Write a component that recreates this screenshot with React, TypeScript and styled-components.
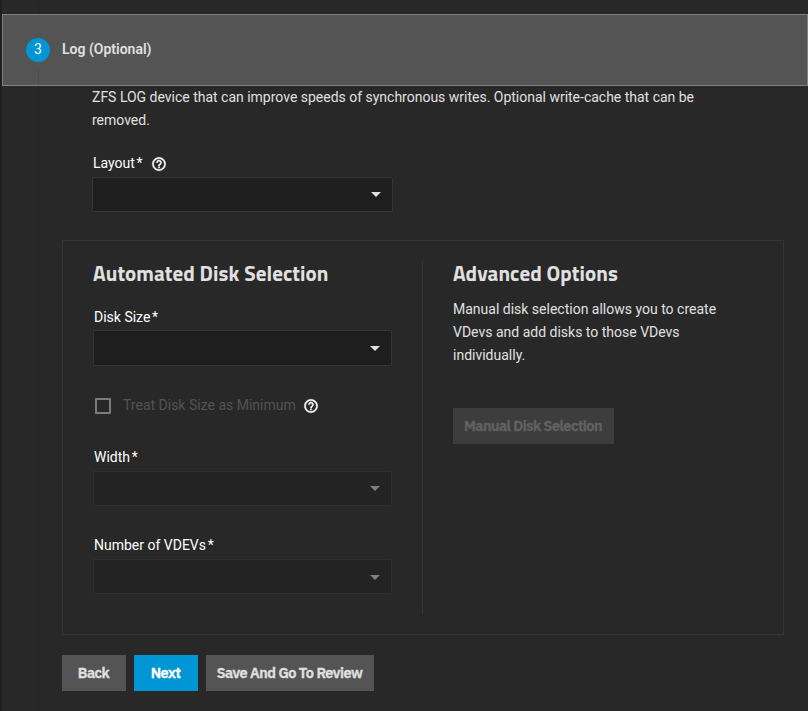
import React from 'react';
import styled, { createGlobalStyle } from 'styled-components';

const GlobalStyle = createGlobalStyle`
  * { box-sizing: border-box; }
  body {
    margin: 0;
    background: #282828;
    color: #e0e0e0;
    font-family: Roboto, sans-serif;
    font-size: 14px;
    line-height: 23px;
  }
`;

const Page = styled.main`
  height: 711px;
  overflow: hidden;
  padding-top: 14px;
  border-left: 2px solid #1f1f1f;
  background: linear-gradient(#232323, #232323) 36px 0 / 1px 100% no-repeat #282828;
`;

const StepHeader = styled.header`
  display: flex;
  align-items: center;
  gap: 12px;
  height: 72px;
  padding-left: 23px;
  border: 1px solid #808080;
  background: linear-gradient(#4c4c4c, #4c4c4c) 35px 55px / 1px 16px no-repeat #545454;
`;

const StepNumber = styled.span`
  width: 24px;
  height: 24px;
  border-radius: 50%;
  background: #0095d5;
  color: #fff;
  line-height: 23px;
  text-align: center;
`;

const StepTitle = styled.span`
  padding-bottom: 2px;
  font-weight: 600;
  line-height: 20px;
`;

const Description = styled.p`
  margin: 0 84px 0 90px;
  height: 46px;
  letter-spacing: -0.008px;
`;

const LayoutField = styled.div`
  width: 301px;
  margin: 20px 0 0 90px;
`;

const HelpSvg = styled.svg`
  width: 16px;
  height: 16px;
  margin: 2px 0 0 8px;
  fill: #fff;
`;

const Label = styled.div<{ $lift?: number }>`
  display: flex;
  align-items: center;
  height: 25px;
  padding: 0 0 ${p => p.$lift ?? 2}px 1px;
  color: #fff;
  line-height: 21px;

  ${HelpSvg} {
    margin-top: 0;
  }
`;

const Star = styled.span`
  margin-left: 1.7px;
`;

const Select = styled.div<{ $disabled?: boolean; $height?: number }>`
  display: flex;
  align-items: center;
  justify-content: flex-end;
  height: ${p => p.$height ?? 35}px;
  padding-right: 11px;
  border: 1px solid ${p => (p.$disabled ? '#2f2f2f' : '#353535')};
  border-radius: 1px;
  background: ${p => (p.$disabled ? '#232323' : '#1e1e1e')};
  color: ${p => (p.$disabled ? '#7f7f7f' : '#e0e0e0')};
`;

const Arrow = styled.span<{ $drop?: number }>`
  margin-top: ${p => p.$drop ?? 0}px;
  border: 5px solid transparent;
  border-top-color: currentColor;
  border-bottom-width: 0;
`;

const Panel = styled.section`
  display: grid;
  grid-template-columns: 360px 1fr;
  width: 722px;
  height: 395px;
  margin: 28px 0 0 60px;
  padding: 20px 0;
  border: 1px solid #353535;
`;

const Column = styled.div<{ $divided?: boolean }>`
  padding: 0 30px;
  border-right: ${p => (p.$divided ? '1px solid #353535' : '0')};
`;

const Heading = styled.h3`
  margin: 0;
  height: 25px;
  font-family: 'Titillium Web', Roboto, sans-serif;
  font-size: 21px;
  font-weight: 700;
  letter-spacing: 0.07px;
  line-height: 25px;
  white-space: nowrap;
`;

const Field = styled.div<{ $top: number }>`
  margin-top: ${p => p.$top}px;
`;

const CheckRow = styled.div`
  display: flex;
  align-items: center;
  height: 24px;
  margin: 27px 0 29px;
  padding-left: 2px;
  color: #535353;
`;

const CheckLabel = styled.span`
  width: 172px;
  white-space: nowrap;
`;

const Checkbox = styled.span`
  width: 16px;
  height: 16px;
  margin: 1px 12px 0 0;
  border: 2px solid #7c7c7c;
  border-radius: 1px;
`;

const OptionsText = styled.p`
  margin: 12px 0 41px;
`;

const Actions = styled.footer`
  display: flex;
  gap: 8px;
  margin: 20px 0 0 60px;
`;

const Button = styled.button<{ $width: number; $primary?: boolean }>`
  width: ${p => p.$width}px;
  height: 36px;
  padding: 0 1px 0 0;
  border: 0;
  background: ${p => (p.$primary ? '#0095d5' : '#545454')};
  color: ${p => (p.$primary ? '#fff' : '#e0e0e0')};
  font-family: 'IBM Plex Sans', Roboto, sans-serif;
  font-size: 14.5px;
  font-weight: 600;
  letter-spacing: -0.49px;
  line-height: 18px;
  white-space: nowrap;
  -webkit-text-stroke: 0.35px currentColor;
  &:disabled {
    background: #3d3d3d;
    color: #626262;
  }
`;

const HelpIcon = () => (
  <HelpSvg viewBox="0 0 24 24">
    <path d="M11 18h2v-2h-2v2zm1-16C6.48 2 2 6.48 2 12s4.48 10 10 10 10-4.48 10-10S17.52 2 12 2zm0 18c-4.41 0-8-3.59-8-8s3.59-8 8-8 8 3.59 8 8-3.59 8-8 8zm0-14c-2.21 0-4 1.79-4 4h2c0-1.1.9-2 2-2s2 .9 2 2c0 2-3 1.75-3 5h2c0-2.25 3-2.5 3-5 0-2.21-1.79-4-4-4z" stroke="#fff" strokeWidth=".6" />
  </HelpSvg>
);

export default function App() {
  return (
    <>
      <GlobalStyle />
      <Page>
        <StepHeader>
          <StepNumber>3</StepNumber>
          <StepTitle>Log (Optional)</StepTitle>
        </StepHeader>
        <Description>
          ZFS LOG device that can improve speeds of synchronous writes. Optional write-cache that can be removed.
        </Description>
        <LayoutField>
          <Label>Layout<Star>*</Star><HelpIcon /></Label>
          <Select><Arrow /></Select>
        </LayoutField>
        <Panel>
          <Column $divided>
            <Heading>Automated Disk Selection</Heading>
            <Field $top={19}>
              <Label $lift={0}>Disk Size<Star>*</Star></Label>
              <Select $height={36}><Arrow /></Select>
            </Field>
            <CheckRow>
              <Checkbox />
              <CheckLabel>Treat Disk Size as Minimum</CheckLabel>
              <HelpIcon />
            </CheckRow>
            <Field $top={0}>
              <Label>Width<Star>*</Star></Label>
              <Select $disabled><Arrow /></Select>
            </Field>
            <Field $top={28}>
              <Label>Number of VDEVs<Star>*</Star></Label>
              <Select $disabled><Arrow $drop={2} /></Select>
            </Field>
          </Column>
          <Column>
            <Heading>Advanced Options</Heading>
            <OptionsText>
              Manual disk selection allows you to create VDevs and add disks to those VDevs individually.
            </OptionsText>
            <Button $width={161} disabled>Manual Disk Selection</Button>
          </Column>
        </Panel>
        <Actions>
          <Button $width={64}>Back</Button>
          <Button $width={64} $primary>Next</Button>
          <Button $width={168}>Save And Go To Review</Button>
        </Actions>
      </Page>
    </>
  );
}
